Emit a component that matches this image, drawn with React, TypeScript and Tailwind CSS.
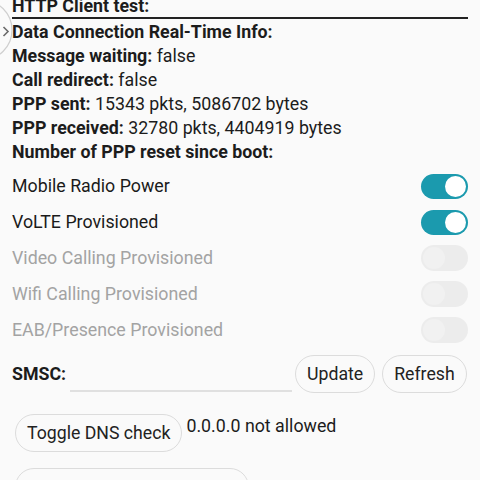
import { ReactNode } from "react";

const infoLines: [string, string][] = [
  ["Message waiting:", " false"],
  ["Call redirect:", " false"],
  ["PPP sent:", " 15343 pkts, 5086702 bytes"],
  ["PPP received:", " 32780 pkts, 4404919 bytes"],
  ["Number of PPP reset since boot:", ""],
];

const switches = [
  { label: "Mobile Radio Power", on: true, enabled: true },
  { label: "VoLTE Provisioned", on: true, enabled: true },
  { label: "Video Calling Provisioned", on: false, enabled: false },
  { label: "Wifi Calling Provisioned", on: false, enabled: false },
  { label: "EAB/Presence Provisioned", on: false, enabled: false },
];

function Toggle({ on, enabled }: { on: boolean; enabled: boolean }) {
  if (!enabled) {
    return (
      <div className="relative w-[47px] h-[26px] rounded-full bg-[#ececec]">
        <div className="absolute left-[2px] top-[2px] w-[22px] h-[22px] rounded-full bg-[#f1f1f1]" />
      </div>
    );
  }
  return (
    <div className="relative w-[47px] h-[25px] rounded-full bg-[#1b9aae]">
      <div
        className={`absolute top-[2px] w-[21px] h-[21px] rounded-full bg-white ${
          on ? "right-[2px]" : "left-[2px]"
        }`}
      />
    </div>
  );
}

function PillButton({ children, className = "" }: { children: ReactNode; className?: string }) {
  return (
    <button
      className={`h-[38px] rounded-full border border-[#dcdcdc] bg-[#fafafa] px-[11px] text-[17.7px] text-[#222] ${className}`}
    >
      {children}
    </button>
  );
}

export default function App() {
  return (
    <div
      className="relative w-[480px] h-[480px] overflow-hidden bg-[#fafafa] text-[#1c1c1c]"
      style={{ fontFamily: "Roboto, 'Noto Sans', sans-serif" }}
    >
      {/* side drawer handle */}
      <svg className="absolute left-0 top-0" width="20" height="64" viewBox="0 0 20 64">
        <circle cx="-18" cy="30" r="30" fill="none" stroke="#cfcfcf" strokeWidth="1.2" />
        <path d="M3.5 27 L8 31.5 L3.5 36" fill="none" stroke="#6b6b6b" strokeWidth="1.6" />
      </svg>

      <div className="px-3 mt-[-6px] text-[17.8px] leading-[24px]">
        <div className="font-bold">HTTP Client test:</div>
        <div className="h-[2px] bg-[#222] mt-[-1px] mb-[1px]" />
        <div className="font-bold">Data Connection Real-Time Info:</div>
        {infoLines.map(([k, v]) => (
          <div key={k}>
            <span className="font-bold">{k}</span>
            {v}
          </div>
        ))}

        <div className="mt-[4px]">
          {switches.map((s) => (
            <div key={s.label} className="flex items-center justify-between h-[36px]">
              <span className={s.enabled ? "text-[#1a1a1a]" : "text-[#a3a3a3]"}>{s.label}</span>
              <Toggle on={s.on} enabled={s.enabled} />
            </div>
          ))}
        </div>

        <div className="flex items-center mt-[7px] h-[38px]">
          <span className="font-bold w-[58px]">SMSC:</span>
          <div className="w-[222px] h-[36px] border-b-2 border-[#e0e0e0]" />
          <PillButton className="ml-[3px]">Update</PillButton>
          <PillButton className="ml-[7px]">Refresh</PillButton>
        </div>

        <div className="flex items-start mt-[21px] pl-[3px]">
          <PillButton className="h-[37px]">Toggle DNS check</PillButton>
          <span className="ml-[4px] mt-0">0.0.0.0 not allowed</span>
        </div>

        <div className="mt-[16px] pl-[3px]">
          <PillButton className="w-[234px]">&nbsp;</PillButton>
        </div>
      </div>
    </div>
  );
}
